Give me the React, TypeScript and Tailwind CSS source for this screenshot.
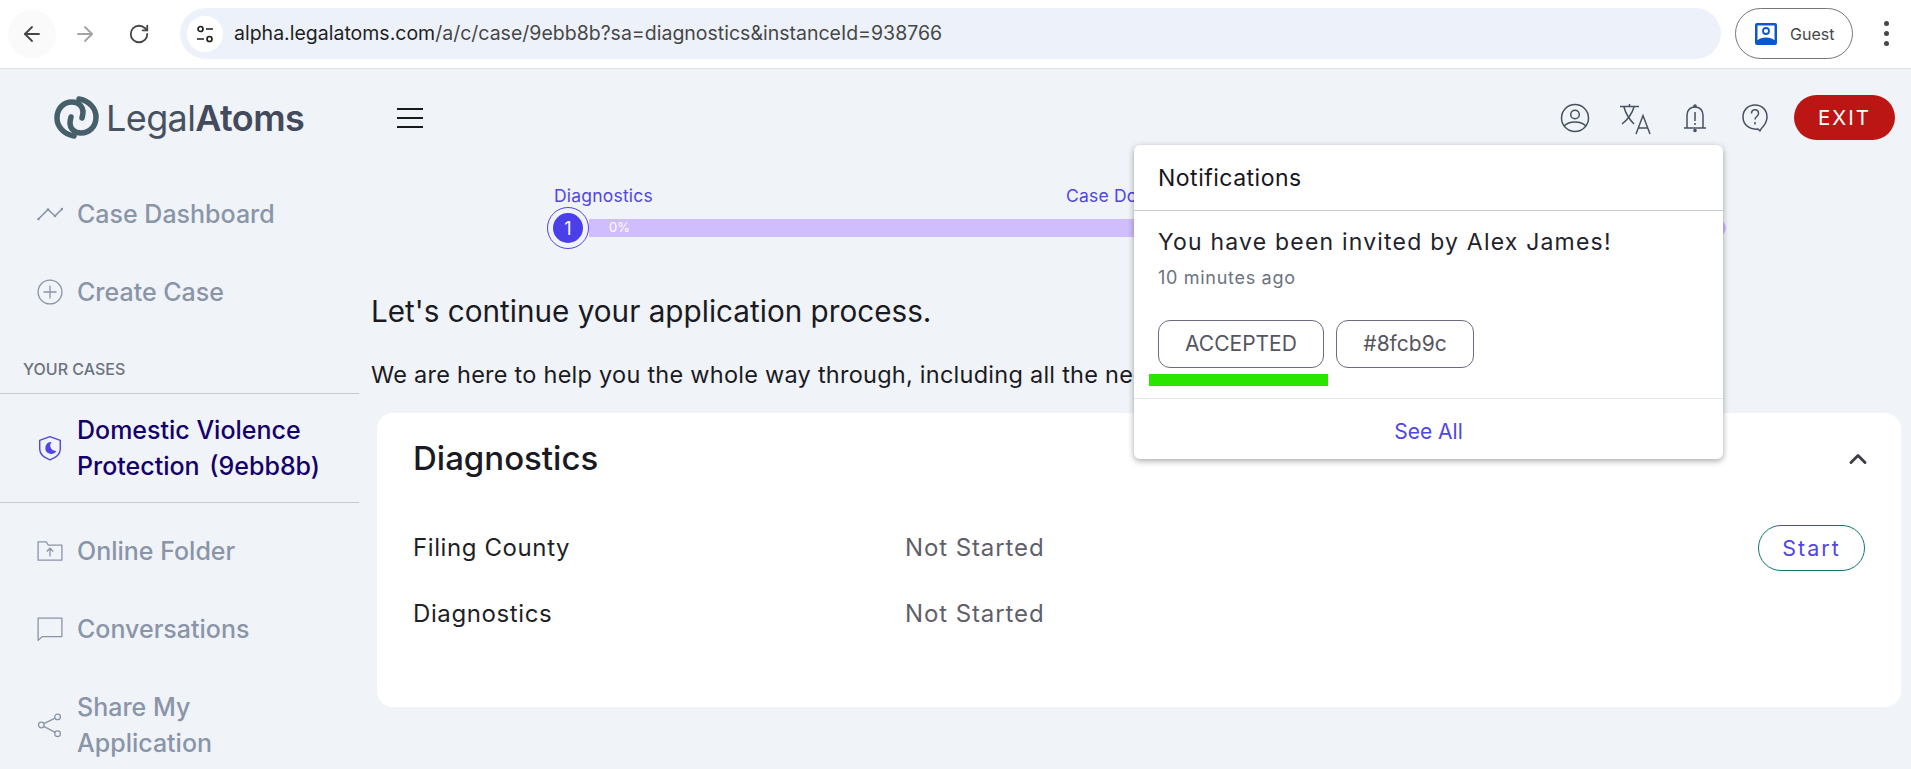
import React from 'react';
import { ArrowLeft, ArrowRight, RotateCw, ChevronUp } from 'lucide-react';

const navIcon = 'h-[26px] w-[26px] shrink-0 text-[#8a95a8]';

function DashboardIcon() {
  return (
    <svg viewBox="0 0 26 14" className={navIcon} fill="none" stroke="currentColor" strokeWidth="1.6">
      <path d="M1.500 12 11 2.500l7 6.500 7-7" strokeLinejoin="round" />
      <circle cx="1.500" cy="12" r="1.300" fill="currentColor" stroke="none" />
      <circle cx="11" cy="2.500" r="1.300" fill="currentColor" stroke="none" />
      <circle cx="18" cy="9" r="1.300" fill="currentColor" stroke="none" />
      <circle cx="25" cy="2" r="1.300" fill="currentColor" stroke="none" />
    </svg>
  );
}

function PlusCircleIcon() {
  return (
    <svg viewBox="0 0 24 24" className={navIcon} fill="none" stroke="currentColor" strokeWidth="1.2">
      <circle cx="12" cy="12" r="11" />
      <path d="M12 6v12M6 12h12" />
    </svg>
  );
}

function ShieldIcon() {
  return (
    <svg viewBox="0 0 24 24" className="h-[26px] w-[26px] shrink-0 text-[#4f46e5]" fill="none" stroke="currentColor" strokeWidth="1.3">
      <path d="M12 1.5 21.5 5v8c0 4.5-4 8-9.500 10C6.500 21 2.500 17.500 2.500 13V5L12 1.500Z" strokeLinejoin="round" />
      <path d="M13.500 6.500a5.500 5.500 0 1 0 4.500 8.200 5 5 0 0 1-4.500-8.200Z" fill="currentColor" stroke="none" />
    </svg>
  );
}

function FolderIcon() {
  return (
    <svg viewBox="0 0 24 20" className={navIcon} fill="none" stroke="currentColor" strokeWidth="1.2">
      <path d="M1 1.500h7.500l2 3H23v14H1v-17Z" strokeLinejoin="round" />
      <path d="M12 15V8M9 10.500 12 7.500l3 3" />
    </svg>
  );
}

function ChatIcon() {
  return (
    <svg viewBox="0 0 24 24" className={navIcon} fill="none" stroke="currentColor" strokeWidth="1.2">
      <path d="M1 2h22v17H5l-4 3.500V2Z" strokeLinejoin="round" />
    </svg>
  );
}

function ShareIcon() {
  return (
    <svg viewBox="0 0 24 24" className={navIcon} fill="none" stroke="currentColor" strokeWidth="1.2">
      <circle cx="19" cy="4.500" r="2.600" />
      <circle cx="4" cy="12" r="2.600" />
      <circle cx="19" cy="20" r="2.600" />
      <path d="M16.700 5.700 6.300 10.800M6.300 13.300l10.400 5.500" />
    </svg>
  );
}

function SideItem({ icon, children }: { icon: React.ReactNode; children: React.ReactNode }) {
  return (
    <div className="flex items-center gap-[14px] pl-[37px] text-[25px] leading-[36px] font-medium text-[#8a95a8]">
      {icon}
      <span>{children}</span>
    </div>
  );
}

function Chrome() {
  return (
    <div className="flex h-[69px] items-center border-b border-[#e0e0e0] bg-white pb-[1px]">
      <div className="flex w-[180px] shrink-0 items-center pl-[8px]">
        <div className="flex h-[48px] w-[48px] items-center justify-center rounded-full bg-[#fafafa]">
          <ArrowLeft className="h-[24px] w-[24px] text-[#474747]" strokeWidth={1.800} />
        </div>
        <ArrowRight className="ml-[17px] h-[24px] w-[24px] text-[#a3a3a3]" strokeWidth={1.800} />
        <RotateCw className="ml-[31px] h-[22px] w-[22px] text-[#474747]" strokeWidth={2} />
      </div>
      <div className="flex h-[51px] w-[1541px] shrink-0 items-center rounded-full bg-[#edf2fa] pl-[7px]">
        <div className="flex h-[36px] w-[36px] items-center justify-center rounded-full bg-white">
          <svg viewBox="0 0 20 20" className="h-[20px] w-[20px] text-[#1f1f1f]" fill="none" stroke="currentColor" strokeWidth="1.700">
            <circle cx="5.500" cy="5" r="2.500" />
            <path d="M11 5h7M2 15h7" />
            <circle cx="14.500" cy="15" r="2.500" />
          </svg>
        </div>
        <span className="ml-[11px] whitespace-nowrap text-[19.500px] text-[#1f1f1f]">
          alpha.legalatoms.com<span className="text-[#474747]">/a/c/case/9ebb8b?sa=diagnostics&amp;instanceId=938766</span>
        </span>
      </div>
      <div className="ml-[14px] flex h-[51px] w-[118px] shrink-0 items-center rounded-full border-[1.500px] border-[#747775] pl-[18px]">
        <svg viewBox="0 0 24 24" className="h-[24px] w-[24px]">
          <rect x="1" y="1" width="22" height="22" rx="2" fill="#0b57d0" />
          <rect x="3.500" y="3.500" width="17" height="14.500" fill="#fff" />
          <circle cx="12" cy="9" r="3" fill="none" stroke="#0b57d0" strokeWidth="1.800" />
          <path d="M4 18c2-3.500 14-3.500 16 0Z" fill="#0b57d0" />
        </svg>
        <span className="ml-[12px] text-[16px] text-[#474747]">Guest</span>
      </div>
      <div className="ml-[31px] flex flex-col gap-[5px]">
        <span className="h-[5px] w-[5px] rounded-full bg-[#474747]" />
        <span className="h-[5px] w-[5px] rounded-full bg-[#474747]" />
        <span className="h-[5px] w-[5px] rounded-full bg-[#474747]" />
      </div>
    </div>
  );
}

function Logo() {
  return (
    <div className="flex shrink-0 items-center">
      <svg viewBox="0 0 56 52" className="h-[52px] w-[56px]" fill="none" stroke="#46606a" strokeWidth="5.500" strokeLinecap="round">
        <path d="M24 44C13 42 7 34 7 26 7 16 14 10 22 10 29 10 33 15 33 20 33 22 32.500 24 32 26" />
        <path d="M29 7C40 9 46 17 46 25 46 35 39 41 31 41 24 41 20 36 20 31 20 29 20.500 27 21 25" />
      </svg>
      <span className="text-[36px] leading-none tracking-[-0.6px] text-[#475160]">
        Legal<span className="font-semibold text-[#434a5c]">Atoms</span>
      </span>
    </div>
  );
}

function HeaderIcons() {
  return (
    <div className="flex items-center text-[#475160]">
      <svg viewBox="0 0 30 30" className="h-[30px] w-[30px]" fill="none" stroke="currentColor" strokeWidth="1.500">
        <circle cx="15" cy="15" r="13.500" />
        <circle cx="15" cy="11.500" r="4.300" />
        <path d="M4 23c5-5.500 17-5.500 22 0" />
      </svg>
      <svg viewBox="0 0 32 32" className="ml-[29px] mt-[3px] h-[32px] w-[32px]" fill="none" stroke="currentColor" strokeWidth="1.500">
        <path d="M1 3.500h19M10.500 1v2.500M5 4c2 8 6 13 10 17M15 4C13 11 8 17 3 21" />
        <path d="M17 31 24 12.500 31 31M19.500 25h9" />
      </svg>
      <svg viewBox="0 0 24 30" className="ml-[32px] h-[30px] w-[24px]" fill="none" stroke="currentColor" strokeWidth="1.500">
        <path d="M4 25V12c0-5 3.500-8 8-8s8 3 8 8v13" />
        <path d="M1 25h22" />
        <path d="M12 9v9M12 20v2" />
        <circle cx="12" cy="3" r="1.800" fill="currentColor" stroke="none" />
        <circle cx="12" cy="27.500" r="1.800" fill="currentColor" stroke="none" />
      </svg>
      <svg viewBox="0 0 26 30" className="ml-[35px] h-[30px] w-[26px]" fill="none" stroke="currentColor" strokeWidth="1.500">
        <path d="M16 26C8 27 1 22 1 14 1 7 6 2 13 2s12 5 12 12c0 5-3 9-6 12l-1 2-2-2Z" strokeLinejoin="round" />
        <path d="M9.500 10.500c0-5 7-5 7 0 0 3-3.500 3-3.500 6M13 19v2.500" />
      </svg>
      <button className="ml-[26px] flex h-[45px] w-[101px] items-center justify-center rounded-full bg-[#bb1614] pt-[1px] text-[20.500px] tracking-[2px] text-white">
        EXIT
      </button>
    </div>
  );
}

function Notifications() {
  return (
    <div className="absolute left-[1134px] top-[145px] z-10 w-[589px] rounded-[6px] bg-white shadow-[0_2px_6px_rgba(0,0,0,0.35)]">
      <div className="flex h-[66px] items-center border-b border-[#c8c9d2] px-[24px] pt-[2px] text-[23px] tracking-[0.5px] text-[#16161d]">
        Notifications
      </div>
      <div className="relative h-[188px] border-b border-[#e4e7ec] px-[24px] pt-[13px]">
        <div className="text-[23px] leading-[36px] tracking-[1.200px] text-[#22222a]">You have been invited by Alex James!</div>
        <div className="mt-[6px] text-[18px] leading-[24px] tracking-[0.700px] text-[#6b7280]">10 minutes ago</div>
        <div className="mt-[30px] flex gap-[12px]">
          <span className="flex h-[48px] w-[166px] items-center justify-center rounded-[12px] border border-[#6f6a80] text-[21px] text-[#55555f]">ACCEPTED</span>
          <span className="flex h-[48px] w-[138px] items-center justify-center rounded-[12px] border border-[#6f6a80] text-[21px] text-[#55555f]">#8fcb9c</span>
        </div>
        <div className="absolute left-[15px] top-[163px] h-[12px] w-[179px] bg-[#2ae500]" />
      </div>
      <div className="flex h-[60px] items-center justify-center pt-[5px] text-[21px] text-[#4f46e5]">See All</div>
    </div>
  );
}

function Stepper() {
  return (
    <div className="relative h-[62px] w-[1179px]">
      <div className="flex text-[17.500px] leading-[24px] tracking-[0.2px] text-[#4f46e5]">
        <span className="ml-[7px] w-[512px]">Diagnostics</span>
        <span className="whitespace-nowrap">Case Do</span>
      </div>
      <div className="-mt-[1px] flex items-center">
        <div className="flex h-[42px] w-[42px] shrink-0 items-center justify-center rounded-full border border-[#4f46e5] bg-[#f0f3f8]">
          <div className="flex h-[30px] w-[30px] items-center justify-center rounded-full bg-[#4a3fe8] text-[18px] text-white">1</div>
        </div>
        <div className="flex h-[18px] flex-1 items-center rounded-r-full bg-[#d0bdfd] pl-[20px] text-[13px] text-white">0%</div>
      </div>
    </div>
  );
}

export default function App() {
  return (
    <div className="relative h-[769px] overflow-hidden bg-[#f0f3f8] font-['Inter',sans-serif]">
      <Chrome />
      <div className="flex">
        <aside className="w-[359px] shrink-0">
          <div className="mb-[52px] mt-[19px] flex h-[56px] items-center pl-[50px] pt-[3px]">
            <Logo />
            <div className="ml-[93px] flex w-[26px] shrink-0 flex-col gap-[7px]">
              <span className="h-[2px] bg-[#1a1a1a]" />
              <span className="h-[2px] bg-[#1a1a1a]" />
              <span className="h-[2px] bg-[#1a1a1a]" />
            </div>
          </div>
          <SideItem icon={<DashboardIcon />}>Case Dashboard</SideItem>
          <div className="mt-[42px]">
            <SideItem icon={<PlusCircleIcon />}>Create Case</SideItem>
          </div>
          <div className="mt-[47px] pl-[23px] text-[16px] leading-[24px] font-medium text-[#6b7280]">YOUR CASES</div>
          <div className="mt-[12px] flex h-[110px] items-center gap-[14px] border-y border-[#c5c9d3] pl-[37px] text-[25px] leading-[36px] font-medium text-[#14006b]">
            <ShieldIcon />
            <span>Domestic Violence<br />Protection <span className="ml-[3px]">(9ebb8b)</span></span>
          </div>
          <div className="mt-[30px]">
            <SideItem icon={<FolderIcon />}>Online Folder</SideItem>
          </div>
          <div className="mt-[42px]">
            <SideItem icon={<ChatIcon />}>Conversations</SideItem>
          </div>
          <div className="mt-[42px]">
            <SideItem icon={<ShareIcon />}>Share My<br />Application</SideItem>
          </div>
        </aside>

        <main className="min-w-0 flex-1">
          <div className="flex h-[85px] items-center justify-end pl-[12px] pr-[16px] pt-[12px]">
            <HeaderIcons />
          </div>
          <div className="ml-[188px] mt-[30px]">
            <Stepper />
          </div>
          <h1 className="ml-[12px] mt-[45px] text-[29.700px] leading-[40px] font-normal text-[#1a1a22]">Let's continue your application process.</h1>
          <p className="ml-[12px] mt-[26px] whitespace-nowrap text-[23.500px] leading-[36px] tracking-[0.25px] text-[#1a1a22]">
            We are here to help you the whole way through, including all the necessary steps.
          </p>
          <section className="ml-[18px] mr-[10px] mt-[20px] h-[294px] rounded-[16px] bg-white px-[36px] pt-[1px]">
            <div className="flex h-[90px] items-center justify-between">
              <h2 className="text-[33px] font-medium text-[#1a1a22]">Diagnostics</h2>
              <ChevronUp className="mr-[-7px] h-[28px] w-[28px] text-[#3f3f4a]" strokeWidth={2.500} />
            </div>
            <div className="mt-[21px] flex h-[46px] items-center text-[24px] tracking-[0.6px]">
              <span className="w-[492px] text-[#1f1f27]">Filing County</span>
              <span className="flex-1 tracking-[0.9px] text-[#5f5f6b]">Not Started</span>
              <button className="flex h-[46px] w-[107px] items-center justify-center rounded-full border border-[#0f766e] text-[21.500px] tracking-[2px] text-[#4f46e5]">Start</button>
            </div>
            <div className="mt-[20px] flex h-[46px] items-center text-[24px] tracking-[0.6px]">
              <span className="w-[492px] text-[#1f1f27]">Diagnostics</span>
              <span className="tracking-[0.9px] text-[#5f5f6b]">Not Started</span>
            </div>
          </section>
        </main>
      </div>
      <Notifications />
    </div>
  );
}
